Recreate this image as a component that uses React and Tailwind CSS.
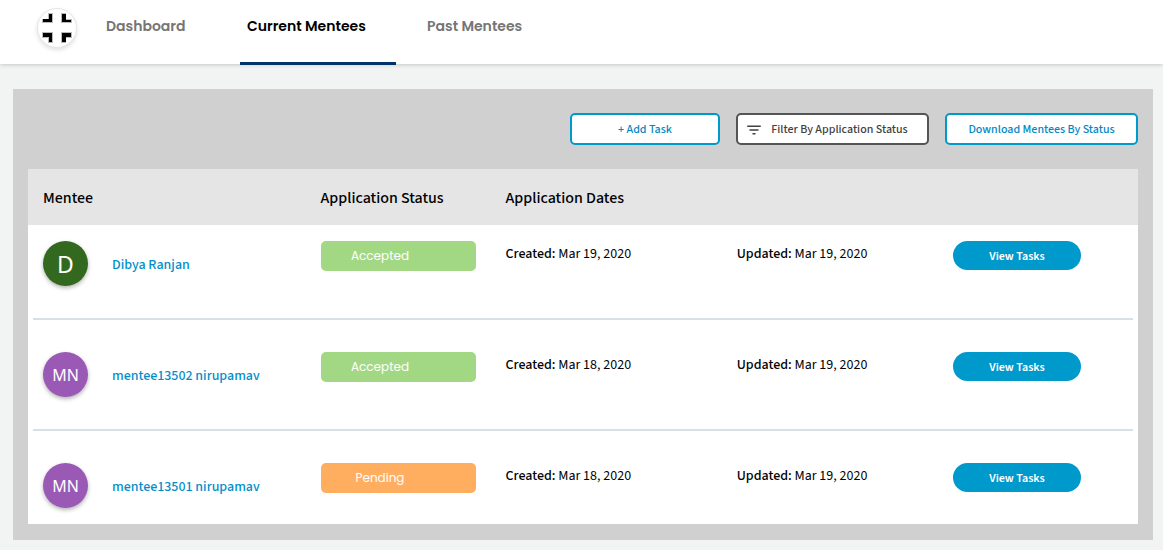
const tabs = [
  { label: "Dashboard", width: "w-[117px]" },
  { label: "Current Mentees", width: "w-[156px]", active: true },
  { label: "Past Mentees", width: "w-[132px]" },
];

const mentees = [
  { name: "Dibya Ranjan", initials: "D", status: "Accepted", created: "Mar 19, 2020", updated: "Mar 19, 2020" },
  { name: "mentee13502 nirupamav", initials: "MN", status: "Accepted", created: "Mar 18, 2020", updated: "Mar 19, 2020" },
  { name: "mentee13501 nirupamav", initials: "MN", status: "Pending", created: "Mar 18, 2020", updated: "Mar 19, 2020" },
];

function Logo() {
  return (
    <a
      href="#home"
      aria-label="Home"
      className="mt-2 flex size-10 shrink-0 items-center justify-center rounded-full border border-[#e6e6e6] bg-white shadow-[0_2px_4px_rgba(0,0,0,0.12)]"
    >
      <svg width="30" height="30" viewBox="0 0 30 30" aria-hidden="true">
        <g fill="#b9b9b9">
          <path d="M6 0h5v10H0V6h6z" />
          <path d="M19 0h5v6h6v4H19z" />
          <path d="M0 19h11v11H6v-5H0z" />
          <path d="M19 19h11v6h-6v5h-5z" />
        </g>
        <g fill="#000">
          <path d="M7 1h3v8H1V6h6z" />
          <path d="M20 1h4v6h5v2h-9z" />
          <path d="M1 20h9v9H7v-5H1z" />
          <path d="M20 20h9v4h-5v5h-4z" />
        </g>
      </svg>
    </a>
  );
}

function Header() {
  return (
    <header className="relative flex h-16 bg-white pl-[37px] shadow-[0_1px_4px_rgba(0,0,0,0.18)]">
      <Logo />
      <nav className="ml-[22px] flex gap-6 font-['Poppins','Inter',sans-serif] text-[14px] leading-5 font-semibold">
        {tabs.map((tab) => (
          <a
            key={tab.label}
            href="#tab"
            aria-current={tab.active ? "page" : undefined}
            className={`h-[65px] pt-4 pl-[7px] whitespace-nowrap ${tab.width} ${
              tab.active ? "border-b-3 border-[#003366] text-black" : "text-[#757575]"
            }`}
          >
            {tab.label}
          </a>
        ))}
      </nav>
    </header>
  );
}

function Toolbar() {
  const base =
    "flex h-8 items-center justify-center rounded-[5px] border-2 bg-white pt-[2px] text-[12px] leading-4 font-medium whitespace-nowrap";
  return (
    <div className="flex flex-wrap justify-end gap-4">
      <button type="button" className={`${base} w-[150px] border-[#0099cc] text-[#0088c4]`}>
        + Add Task
      </button>
      <button type="button" className={`${base} w-[193px] gap-2 border-[#555] pr-3 text-[#404040]`}>
        <svg className="shrink-0" width="18" height="18" viewBox="0 0 24 24" fill="currentColor" aria-hidden="true">
          <path d="M10 18h4v-2h-4v2zM3 6v2h18V6H3zm3 7h12v-2H6v2z" />
        </svg>
        Filter By Application Status
      </button>
      <button type="button" className={`${base} w-[193px] border-[#0099cc] text-[#0088c4]`}>
        Download Mentees By Status
      </button>
    </div>
  );
}

function Avatar({ initials }) {
  const look = initials.length === 1 ? "bg-[#33691e] text-[23px]" : "bg-[#9b59b6] text-[16px]";
  return (
    <span
      className={`flex size-[45px] shrink-0 items-center justify-center rounded-full font-['Noto_Sans',sans-serif] text-white shadow-[0_2px_4px_rgba(0,0,0,0.3)] ${look}`}
    >
      {initials}
    </span>
  );
}

function MenteeRow({ mentee, first, last }) {
  const pad = `${first ? "pt-4" : "pt-8"} ${last ? "pb-4" : "pb-[34px]"}`;
  return (
    <tr
      className={`relative align-top ${
        last ? "" : "after:absolute after:inset-x-[5px] after:bottom-0 after:h-[2px] after:bg-[#d9dfe9]"
      }`}
    >
      <td className={`px-[15px] ${pad}`}>
        <div className="flex items-center gap-6">
          <Avatar initials={mentee.initials} />
          <a href="#mentee" className="pt-[2px] font-medium text-[#008ec9]">
            {mentee.name}
          </a>
        </div>
      </td>
      <td className={`px-[15px] ${pad}`}>
        <div
          className={`flex h-[30px] items-center justify-center rounded-[5px] pr-9 font-['Poppins','Inter',sans-serif] text-[12px] text-white ${
            mentee.status === "Accepted" ? "bg-[#a2d884]" : "bg-[#ffae60]"
          }`}
        >
          {mentee.status}
        </div>
      </td>
      <td className={`pl-[15px] leading-[26px] ${pad}`}>
        <b className="font-medium">Created:</b> {mentee.created}
      </td>
      <td className={`pl-[15px] leading-[26px] ${pad}`}>
        <b className="font-medium">Updated:</b> {mentee.updated}
      </td>
      <td className={pad}>
        <button
          type="button"
          className="flex h-[29px] w-32 items-center justify-center rounded-full bg-[#0099cc] pt-[2px] text-[12px] font-semibold text-white"
        >
          View Tasks
        </button>
      </td>
    </tr>
  );
}

export default function App() {
  return (
    <div className="min-h-screen bg-[#f2f4f4] font-['Source_Sans_Pro','Source_Sans_3','Noto_Sans_CJK_SC',sans-serif] text-[14px] leading-5 text-black">
      <Header />
      <main className="pt-[25px] pr-[10px] pb-[10px] pl-[13px]">
        <section className="bg-[#d0d0d0] px-[15px] pt-6 pb-4">
          <Toolbar />
          <table className="mt-6 w-full table-fixed bg-white text-left">
            <colgroup>
              <col className="w-3/12" />
              <col className="w-2/12" />
              <col className="w-5/24" />
              <col className="w-5/24" />
              <col className="w-2/12" />
            </colgroup>
            <thead>
              <tr className="h-14 bg-[#e5e5e5] text-[16px]">
                <th scope="col" className="px-[15px] pt-[2px] font-medium">Mentee</th>
                <th scope="col" className="px-[15px] pt-[2px] font-medium whitespace-nowrap">Application Status</th>
                <th scope="colgroup" colSpan={3} className="px-[15px] pt-[2px] font-medium">Application Dates</th>
              </tr>
            </thead>
            <tbody>
              {mentees.map((mentee, i) => (
                <MenteeRow
                  key={mentee.name}
                  mentee={mentee}
                  first={i === 0}
                  last={i === mentees.length - 1}
                />
              ))}
            </tbody>
          </table>
        </section>
      </main>
    </div>
  );
}
